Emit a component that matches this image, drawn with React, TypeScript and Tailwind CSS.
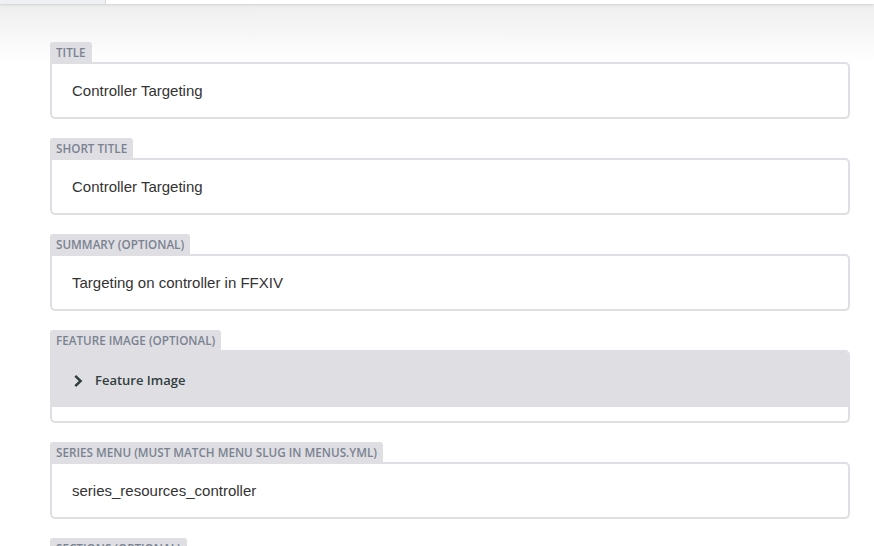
const labelFont = "font-['Open_Sans','Noto_Sans',sans-serif]";

function FieldLabel({ text }: { text: string }) {
  return (
    <div className="flex">
      <span
        className={`${labelFont} h-[20px] rounded-t-[3px] bg-[#dfdfe3] px-[6px] text-[11.7px] font-semibold uppercase leading-[21px] text-[#7a8291]`}
      >
        {text}
      </span>
    </div>
  );
}

function TextField({ label, value }: { label: string; value: string }) {
  return (
    <div className="mb-[19px]">
      <FieldLabel text={label} />
      <div className="flex h-[57px] items-center rounded-b-[5px] rounded-tr-[5px] border-2 border-[#dfdfe3] bg-white px-[20px] pt-[2px] font-['Liberation_Sans',Arial,sans-serif] text-[15px] text-[#333]">
        {value}
      </div>
    </div>
  );
}

function ObjectField({ label, title }: { label: string; title: string }) {
  return (
    <div className="mb-[19px]">
      <FieldLabel text={label} />
      <div className="overflow-hidden rounded-b-[5px] rounded-tr-[5px] border-2 border-[#dfdfe3] bg-white">
        <div className="flex h-[55px] items-center bg-[#dfdfe3] pl-[21px] pt-[2px]">
          <svg width="10" height="14" viewBox="0 0 10 14" className="mr-[12px]">
            <path d="M2.3 1.8 L7.6 7 L2.3 12.2" fill="none" stroke="#313d3e" strokeWidth="2.5" />
          </svg>
          <span className={`${labelFont} text-[13px] font-semibold text-[#313d3e]`}>{title}</span>
        </div>
        <div className="h-[14px]" />
      </div>
    </div>
  );
}

export default function App() {
  return (
    <div className="h-[546px] w-[874px] overflow-hidden bg-[linear-gradient(to_bottom,#ededed_0px,#ffffff_62px)]">
      <div className="flex h-[4px] shadow-[0_1px_3px_rgba(0,0,0,0.12)]">
        <div className="w-[106px] border-r border-[#d8d8dc] bg-[#eff0f4]" />
        <div className="flex-1 bg-white" />
      </div>
      <div className="ml-[50px] mt-[38px] w-[800px]">
        <TextField label="Title" value="Controller Targeting" />
        <TextField label="Short Title" value="Controller Targeting" />
        <TextField label="Summary (optional)" value="Targeting on controller in FFXIV" />
        <ObjectField label="Feature Image (optional)" title="Feature Image" />
        <TextField label="Series Menu (must match menu slug in menus.yml)" value="series_resources_controller" />
        <FieldLabel text="Sections (optional)" />
      </div>
    </div>
  );
}
